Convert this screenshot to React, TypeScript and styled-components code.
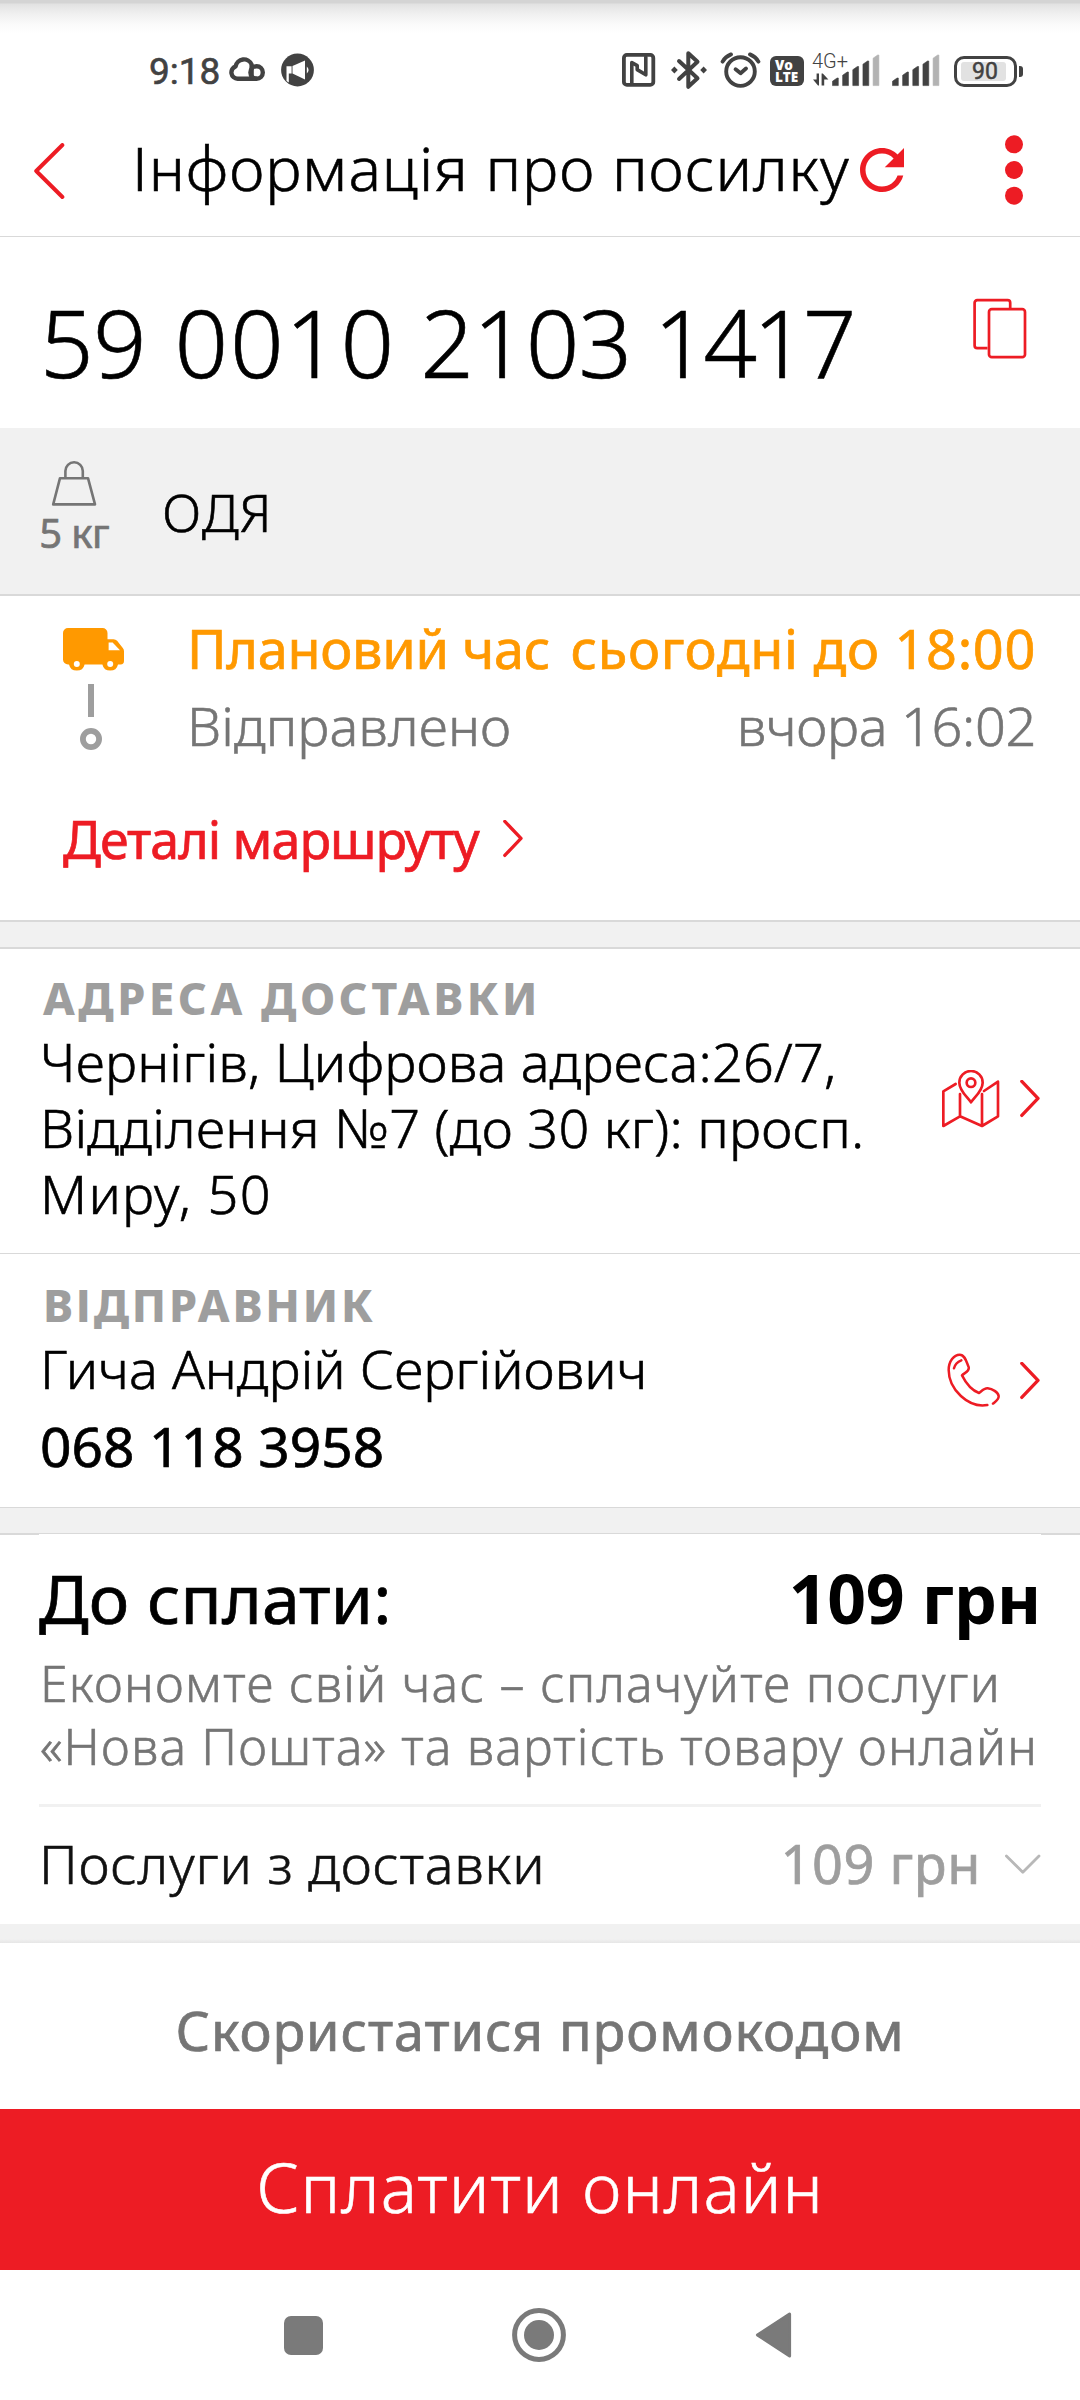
import React from "react";
import styled, { createGlobalStyle } from "styled-components";

const RED = "#ed1c24";
const ORANGE = "#ff9900";
const GREY = "#757575";
const LIGHT_GREY = "#9e9e9e";
const PANEL = "#f1f1f1";
const LINE = "#d9d9d9";
const STATUS = "#424242";

const GlobalStyle = createGlobalStyle`
  * { box-sizing: border-box; }
  body {
    margin: 0;
    background: #fff;
    color: #000;
    font-family: "Noto Sans", "Open Sans", sans-serif;
    font-weight: 300;
  }
  svg { display: block; flex: none; }
`;

interface TextProps {
  $size: number;
  $line?: number;
  $weight?: number;
  $color?: string;
  $spacing?: number;
}

/* a hairline stroke brings the installed weights closer to the brand face */
const strokeFor = (weight: number) => (weight === 300 ? 0.6 : weight === 400 ? 0.7 : 0);

const Text = styled.div<TextProps>`
  flex: none;
  white-space: nowrap;
  font-size: ${(p) => p.$size}px;
  line-height: ${(p) => p.$line ?? 66}px;
  font-weight: ${(p) => p.$weight ?? 300};
  color: ${(p) => p.$color ?? "#000"};
  letter-spacing: ${(p) => p.$spacing ?? 0}px;
  -webkit-text-stroke: ${(p) => strokeFor(p.$weight ?? 300)}px currentColor;
`;

const Screen = styled.main`
  width: 1080px;
  height: 2400px;
  overflow: hidden;
  display: flex;
  flex-direction: column;
  background: #fff;
`;

/* ---------- status bar ---------- */

const StatusBar = styled.div`
  flex: none;
  height: 106px;
  padding: 36px 0 0 149px;
  display: flex;
  align-items: center;
  background: linear-gradient(#d4d4d4 0 3px, #e2e2e2 4px, #f0f0f0 14px, #fafafa 24px, #fff 34px);
  color: ${STATUS};
  font-family: Roboto, sans-serif;
`;

const Slot = styled.div<{ $left: number }>`
  margin-left: ${(p) => p.$left}px;
`;

const Clock = styled.div`
  width: 72px;
  font-size: 37px;
  line-height: 40px;
  font-weight: 400;
  padding-top: 1px;
  -webkit-text-stroke: 0.6px ${STATUS};
`;

const VolteBadge = styled.div`
  width: 34px;
  height: 30px;
  border-radius: 6px;
  background: ${STATUS};
  color: #fff;
  font: 800 13.5px/12px "Open Sans", sans-serif;
  padding: 3px 0 0 5px;
`;

const NetworkSignal = styled.div`
  position: relative;
  width: 69px;
`;

const NetworkType = styled.span`
  position: absolute;
  left: 0;
  top: 0;
  font-size: 20px;
  line-height: 20px;
`;

const Battery = styled.div`
  width: 63px;
  height: 31px;
  border: 3px solid ${STATUS};
  border-radius: 10px;
  padding: 3px 8px 3px 4px;
`;

const Charge = styled.div`
  height: 19px;
  border-radius: 3px;
  background: #e2e2e2;
  font-size: 23px;
  line-height: 20px;
  font-weight: 400;
  padding-left: 11px;
  -webkit-text-stroke: 0.5px ${STATUS};
`;

const BatteryTip = styled.div`
  width: 4px;
  height: 11px;
  margin-left: 2px;
  border-radius: 0 3px 3px 0;
  background: ${STATUS};
`;

const BatteryGroup = styled.div`
  display: flex;
  align-items: center;
  margin-left: 14px;
`;

const SignalBars = ({ x }: { x: number }) => (
  <g>
    {[27, 21, 15.5, 10, 4].map((top, i) => {
      const left = x + i * 10.15;
      return (
        <path
          key={top}
          d={`M${left} 34.6V${top + 3.2}L${left + 4.6} ${top}H${left + 5.8}V34.6Z`}
          fill={i === 4 ? "#b3b3b3" : STATUS}
          stroke={i === 4 ? "#b3b3b3" : STATUS}
          strokeWidth="0.6"
          strokeLinejoin="round"
        />
      );
    })}
  </g>
);

const CloudIcon = () => (
  <svg width="36" height="40" viewBox="0 0 36 40" fill="none" stroke={STATUS} strokeWidth="4.4" strokeLinejoin="round">
    <path d="M28 27.8H8.6A6.4 6.4 0 0 1 6.6 15.4A8.4 8.4 0 0 1 22.6 13.5V27.8" />
    <circle cx="27.6" cy="21.5" r="6.2" />
  </svg>
);

const MegaphoneIcon = () => (
  <svg width="33" height="40" viewBox="0 0 33 40">
    <circle cx="16.5" cy="19" r="16.4" fill={STATUS} />
    <path d="M5.5 15.3H10.6V22.4H7.8V31.5L5.5 30Z" fill="#fff" />
    <path d="M11.5 15L24 9.6V28.4L11.5 22.6Z" fill="#fff" />
    <path d="M25.8 15.5Q29.4 19 25.8 22.5Z" fill="#fff" />
  </svg>
);

const NfcIcon = () => (
  <svg width="34" height="40" viewBox="0 0 34 40" fill="none" stroke={STATUS} strokeLinecap="round" strokeLinejoin="round">
    <rect x="1.9" y="3.9" width="29.4" height="30" rx="3" strokeWidth="3.8" />
    <path d="M9.8 32V11.5L15.2 14.6V18.6L23.8 23.8V6" strokeWidth="3.6" />
  </svg>
);

const BluetoothIcon = () => (
  <svg width="36" height="40" viewBox="0 0 36 40" fill="none" stroke={STATUS} strokeWidth="4" strokeLinecap="round" strokeLinejoin="round">
    <path d="M8 10L26.5 27.3L17.3 35.8V2.2L26.5 10.8L8 28" />
    <path d="M0 19L3.4 15.6L6.8 19L3.4 22.4ZM29.2 19L32.6 15.6L36 19L32.6 22.4Z" fill={STATUS} stroke="none" />
  </svg>
);

const AlarmIcon = () => (
  <svg width="41" height="40" viewBox="0 0 41 40" fill="none" stroke={STATUS} strokeWidth="3.9" strokeLinecap="round" strokeLinejoin="round">
    <circle cx="20.5" cy="20.6" r="14.3" />
    <path d="M2.6 10.6Q5.4 5.6 11 3.4M38.4 10.6Q35.6 5.6 30 3.4" />
    <path d="M15.6 18.2L20.6 22.2L26 17.6" />
  </svg>
);

/* ---------- app header ---------- */

const Header = styled.header`
  flex: none;
  height: 131px;
  padding-left: 34px;
  border-bottom: 1px solid ${LINE};
  display: flex;
  align-items: center;
`;

const Title = styled(Text)`
  width: 728px;
  margin-left: 67px;
  padding-bottom: 6px;
`;

const MenuSlot = styled.div`
  margin-left: 101px;
`;

const ChevronLeft = () => (
  <svg width="31" height="56" viewBox="0 0 31 56" fill="none" stroke={RED} strokeWidth="3.9" strokeLinecap="round" strokeLinejoin="round">
    <path d="M28.4 2L2.2 28L28.4 54" />
  </svg>
);

const ChevronRight = () => (
  <svg width="20" height="38" viewBox="0 0 20 38" fill="none" stroke={RED} strokeWidth="3.3" strokeLinecap="round" strokeLinejoin="round">
    <path d="M1.8 1.4L18 18.4L1.8 35.4" />
  </svg>
);

const RefreshIcon = () => (
  <svg width="44" height="46" viewBox="0 0 44 46" fill={RED}>
    <path
      transform="scale(2.75) translate(-4 -4)"
      d="M17.65 6.35C16.2 4.9 14.21 4 12 4c-4.42 0-7.99 3.58-7.99 8s3.57 8 7.99 8c3.73 0 6.84-2.55 7.73-6h-2.08c-.82 2.33-3.04 4-5.65 4-3.31 0-6-2.69-6-6s2.69-6 6-6c1.66 0 3.14.69 4.22 1.78L13 11h7V4l-2.35 2.35z"
    />
  </svg>
);

const DotsIcon = () => (
  <svg width="18" height="72" viewBox="0 0 18 72" fill={RED}>
    <circle cx="9" cy="9.3" r="9" />
    <circle cx="9" cy="35" r="9" />
    <circle cx="9" cy="60.7" r="9" />
  </svg>
);

/* ---------- parcel number and contents ---------- */

const NumberSection = styled.section`
  flex: none;
  height: 191px;
  padding: 50px 53px 0 40px;
  display: flex;
  justify-content: space-between;
  align-items: flex-start;
`;

const NumberGroup = styled.span<{ $shift?: number; $spacing: number }>`
  margin-left: ${(p) => p.$shift ?? 0}px;
  letter-spacing: ${(p) => p.$spacing}px;
`;

const CopySlot = styled.div`
  padding-top: 11px;
`;

const CopyIcon = () => (
  <svg width="54" height="62" viewBox="0 0 54 62" fill="none" stroke={RED} strokeWidth="2.7">
    <path d="M14.5 50.2H4.2a2.6 2.6 0 0 1-2.6-2.6V4.8a2.6 2.6 0 0 1 2.6-2.6H34.6a2.6 2.6 0 0 1 2.6 2.6V11" />
    <rect x="16" y="11.2" width="36" height="48" rx="2.8" />
  </svg>
);

const ContentsSection = styled.section`
  flex: none;
  height: 168px;
  padding-left: 38px;
  background: ${PANEL};
  border-bottom: 2px solid ${LINE};
  display: flex;
  align-items: flex-start;
`;

const Weight = styled.div`
  width: 72px;
  padding-top: 33px;
  display: flex;
  flex-direction: column;
  align-items: center;
`;

const Contents = styled(Text)`
  margin-left: 52px;
  padding-top: 1px;
`;

const WeightIcon = () => (
  <svg width="46" height="46" viewBox="0 0 46 46" fill="none" stroke={GREY} strokeWidth="2.6" strokeLinejoin="round">
    <path d="M9 17.2H37L44 43.4H2.2Z" />
    <path d="M14.4 17V10A8.7 8.7 0 0 1 31.8 10V17" />
  </svg>
);

/* ---------- route ---------- */

const RouteSection = styled.section`
  flex: none;
  height: 324px;
  padding: 12px 44px 0 63px;
`;

const Timeline = styled.div`
  display: flex;
  align-items: flex-start;
`;

const TimelineMarks = styled.div`
  padding-top: 20px;
`;

const TimelineRows = styled.div`
  flex: 1;
  margin-left: 62px;
`;

const TimelineRow = styled.div<{ $height: number }>`
  height: ${(p) => p.$height}px;
  display: flex;
  align-items: center;
  justify-content: space-between;
`;

const RouteLink = styled.a`
  height: 154px;
  display: flex;
  align-items: center;
  gap: 24px;
`;

const TimelineIcon = () => (
  <svg width="62" height="126" viewBox="0 0 62 126">
    <path
      fill={ORANGE}
      d="M5 0H39.5a5 5 0 0 1 5 5V11.2H50.5a5 5 0 0 1 3.6 1.6L59.8 20a5 5 0 0 1 1.2 3.3V33a3.4 3.4 0 0 1-3.4 3.4H55A8 8 0 0 1 39.4 36.4H21.6A8 8 0 0 1 6 36.4H5a5 5 0 0 1-5-5V5A5 5 0 0 1 5 0Z"
    />
    <path fill="#fff" d="M45.6 14.6H49.6L57 22.2H45.6Z" />
    <circle cx="13.8" cy="36" r="3" fill="#fff" />
    <circle cx="47.2" cy="36" r="3" fill="#fff" />
    <rect x="25" y="56" width="6" height="33" fill={LIGHT_GREY} />
    <circle cx="28" cy="111" r="8.1" fill="none" stroke={LIGHT_GREY} strokeWidth="5.8" />
  </svg>
);

/* ---------- address and sender ---------- */

const Gap = styled.div<{ $height: number; $border: number }>`
  flex: none;
  height: ${(p) => p.$height}px;
  background: ${PANEL};
  border: solid ${LINE};
  border-width: ${(p) => p.$border}px 0;
`;

const InfoSection = styled.section<{ $height: number; $top: number; $lined?: boolean }>`
  flex: none;
  height: ${(p) => p.$height}px;
  padding: ${(p) => p.$top}px 40px 0 40px;
  border-bottom: ${(p) => (p.$lined ? 1 : 0)}px solid ${LINE};
  display: flex;
  justify-content: space-between;
`;

const InfoLabel = styled(Text)`
  padding-left: 3px;
`;

const InfoActions = styled.div<{ $lift: number }>`
  display: flex;
  align-items: center;
  gap: 20px;
  padding-bottom: ${(p) => p.$lift}px;
`;

const MapIcon = () => (
  <svg width="58" height="58" viewBox="0 0 174 174" fill="none" stroke={RED} strokeWidth="8" strokeLinecap="round" strokeLinejoin="round">
    <path d="M41 42L4 64V168L54 139L120 168L168 139V35L126 63M54 72V139M120 72V168" />
    <path d="M87 97C75 80 52 62 52 38A35 35 0 0 1 122 38C122 62 99 80 87 97Z" />
    <circle cx="87" cy="38" r="13" />
  </svg>
);

const PhoneIcon = () => (
  <svg width="54" height="56" viewBox="0 0 162 168" fill="none" stroke={RED} strokeWidth="7.5" strokeLinecap="round" strokeLinejoin="round">
    <path
      transform="translate(3 -1)"
      d="M121 157C64 167 5 110 5 52C5 26 21 6 38 6C54 6 58 27 65 43C69 57 52 60 45 68C58 94 78 114 96 121C104 115 112 106 122 107C136 109 153 118 155 130C156 142 143 148 138 153M21 47Q25 30 43 23"
    />
  </svg>
);

/* ---------- payment ---------- */

const PaymentSection = styled.section`
  flex: none;
  height: 390px;
`;

const EdgeNotches = styled.div`
  height: 1px;
  border: solid ${LINE};
  border-width: 0 39px;
`;

const PaymentBody = styled.div`
  padding: 10px 39px 0;
`;

const PaymentRow = styled.div<{ $height: number; $lift?: number }>`
  height: ${(p) => p.$height}px;
  padding-bottom: ${(p) => p.$lift ?? 0}px;
  display: flex;
  align-items: center;
  justify-content: space-between;
`;

const PaymentNote = styled.div`
  padding: 1px 0 0 1px;
`;

const Rule = styled.div`
  height: 3px;
  margin-top: 26px;
  background: ${PANEL};
`;

const Price = styled.div`
  display: flex;
  align-items: center;
  gap: 23px;
`;

const ChevronDown = () => (
  <svg width="37" height="22" viewBox="0 0 37 22" fill="none" stroke="#b8b8b8" strokeWidth="2.8" strokeLinecap="round" strokeLinejoin="round">
    <path d="M2.4 4L18.8 20.2L35 4" />
  </svg>
);

const FooterGap = styled.div`
  flex: none;
  height: 19px;
  background: linear-gradient(${PANEL} 0 15px, #e6e6e6 19px);
`;

const PromoButton = styled.button`
  flex: none;
  height: 166px;
  padding: 7px 0 0;
  border: 0;
  background: #fff;
  display: flex;
  justify-content: center;
  align-items: center;
  font-family: inherit;
`;

const PayButton = styled.button`
  flex: none;
  height: 161px;
  padding: 0 0 5px;
  border: 0;
  background: ${RED};
  display: flex;
  justify-content: center;
  align-items: center;
  font-family: inherit;
`;

/* ---------- system navigation ---------- */

const SystemNav = styled.nav`
  flex: none;
  height: 130px;
  padding-left: 284px;
  display: flex;
  align-items: center;
`;

const RecentsKey = styled.div`
  width: 39px;
  height: 39px;
  border-radius: 7px;
  background: #7a7a7a;
`;

const NavSlot = styled.div`
  margin-left: 189px;
`;

export default function App() {
  return (
    <Screen>
      <GlobalStyle />

      <StatusBar>
        <Clock>9:18</Clock>
        <Slot $left={8}><CloudIcon /></Slot>
        <Slot $left={16}><MegaphoneIcon /></Slot>
        <Slot $left={308}><NfcIcon /></Slot>
        <Slot $left={15}><BluetoothIcon /></Slot>
        <Slot $left={13}><AlarmIcon /></Slot>
        <Slot $left={9}>
          <VolteBadge>Vo<br />LTE</VolteBadge>
        </Slot>
        <Slot $left={8}>
          <NetworkSignal>
            <NetworkType>4G+</NetworkType>
            <svg width="69" height="40" viewBox="0 0 69 40" fill={STATUS}>
              <path d="M4.6 22.6H7V34.4H6L1 28.6H4.6ZM9.6 22.6H10.8L16.4 28.6H12.2V34.4H9.6Z" />
              <SignalBars x={20.5} />
            </svg>
          </NetworkSignal>
        </Slot>
        <Slot $left={11}>
          <svg width="48" height="40" viewBox="0 0 48 40"><SignalBars x={0.5} /></svg>
        </Slot>
        <BatteryGroup>
          <Battery><Charge>90</Charge></Battery>
          <BatteryTip />
        </BatteryGroup>
      </StatusBar>

      <Header>
        <ChevronLeft />
        <Title $size={61} $line={80} $spacing={0.95}>Інформація про посилку</Title>
        <RefreshIcon />
        <MenuSlot><DotsIcon /></MenuSlot>
      </Header>

      <NumberSection>
        <Text $size={94} $line={110}>
          <NumberGroup $spacing={-0.6}>59</NumberGroup>{" "}
          <NumberGroup $spacing={1.6} $shift={4}>0010</NumberGroup>{" "}
          <NumberGroup $spacing={-0.9}>2103</NumberGroup>{" "}
          <NumberGroup $spacing={-4} $shift={-2}>1417</NumberGroup>
        </Text>
        <CopySlot><CopyIcon /></CopySlot>
      </NumberSection>

      <ContentsSection>
        <Weight>
          <WeightIcon />
          <Text $size={40} $line={51} $weight={400} $color={GREY} $spacing={-0.6}>5 кг</Text>
        </Weight>
        <Contents $size={52} $line={166} $spacing={1}>ОДЯ</Contents>
      </ContentsSection>

      <RouteSection>
        <Timeline>
          <TimelineMarks><TimelineIcon /></TimelineMarks>
          <TimelineRows>
            <TimelineRow $height={80}>
              <Text $size={54} $weight={400} $color={ORANGE} $spacing={-0.3}>Плановий час</Text>
              <Text $size={54} $weight={400} $color={ORANGE} $spacing={0.7}>сьогодні до 18:00</Text>
            </TimelineRow>
            <TimelineRow $height={74}>
              <Text $size={54} $color={GREY} $spacing={0.1}>Відправлено</Text>
              <Text $size={54} $color={GREY} $spacing={-0.3}>вчора 16:02</Text>
            </TimelineRow>
          </TimelineRows>
        </Timeline>
        <RouteLink>
          <Text $size={52} $weight={400} $color={RED} $spacing={-1}>Деталі маршруту</Text>
          <ChevronRight />
        </RouteLink>
      </RouteSection>

      <Gap $height={29} $border={2} />

      <InfoSection $height={305} $top={19} $lined>
        <div>
          <InfoLabel $size={45} $line={60} $weight={800} $color={LIGHT_GREY} $spacing={3.5}>АДРЕСА ДОСТАВКИ</InfoLabel>
          <Text $size={54} $spacing={0.2}>Чернігів, Цифрова адреса:26/7,</Text>
          <Text $size={54} $spacing={0.25}>Відділення №7 (до 30 кг): просп.</Text>
          <Text $size={54} $spacing={1.3}>Миру, 50</Text>
        </div>
        <InfoActions $lift={23}>
          <MapIcon />
          <ChevronRight />
        </InfoActions>
      </InfoSection>

      <InfoSection $height={253} $top={21}>
        <div>
          <InfoLabel $size={45} $line={60} $weight={800} $color={LIGHT_GREY} $spacing={2.8}>ВІДПРАВНИК</InfoLabel>
          <Text $size={54} $line={67} $spacing={0.05}>Гича Андрій Сергійович</Text>
          <Text $size={55} $line={88} $weight={400} $spacing={0.1}>068 118 3958</Text>
        </div>
        <InfoActions $lift={21}>
          <PhoneIcon />
          <ChevronRight />
        </InfoActions>
      </InfoSection>

      <Gap $height={27} $border={1} />

      <PaymentSection>
        <EdgeNotches />
        <PaymentBody>
          <PaymentRow $height={106}>
            <Text $size={68} $line={106} $weight={400} $spacing={0.1}>До сплати:</Text>
            <Text $size={68} $line={106} $weight={700} $spacing={-0.3}>109 грн</Text>
          </PaymentRow>
          <PaymentNote>
            <Text $size={50} $line={63} $color={GREY} $spacing={1.3}>Економте свій час – сплачуйте послуги</Text>
            <Text $size={50} $line={63} $color={GREY} $spacing={1.15}>«Нова Пошта» та вартість товару онлайн</Text>
          </PaymentNote>
          <Rule />
          <PaymentRow $height={117} $lift={5}>
            <Text $size={54} $color="#111" $spacing={0.8}>Послуги з доставки</Text>
            <Price>
              <Text $size={54} $weight={400} $color={LIGHT_GREY} $spacing={0.6}>109 грн</Text>
              <ChevronDown />
            </Price>
          </PaymentRow>
        </PaymentBody>
      </PaymentSection>

      <FooterGap />

      <PromoButton>
        <Text $size={54} $weight={400} $color={GREY} $spacing={0.9}>Скористатися промокодом</Text>
      </PromoButton>
      <PayButton>
        <Text $size={68} $line={90} $color="#fff" $spacing={1}>Сплатити онлайн</Text>
      </PayButton>

      <SystemNav>
        <RecentsKey />
        <NavSlot>
          <svg width="54" height="54" viewBox="0 0 54 54">
            <circle cx="27" cy="27" r="24.4" fill="none" stroke="#7a7a7a" strokeWidth="5" />
            <circle cx="27" cy="27" r="15" fill="#7a7a7a" />
          </svg>
        </NavSlot>
        <NavSlot>
          <svg width="37" height="46" viewBox="0 0 37 46">
            <path d="M34.6 2V44L2.4 23Z" fill="#7a7a7a" stroke="#7a7a7a" strokeWidth="3" strokeLinejoin="round" />
          </svg>
        </NavSlot>
      </SystemNav>
    </Screen>
  );
}
